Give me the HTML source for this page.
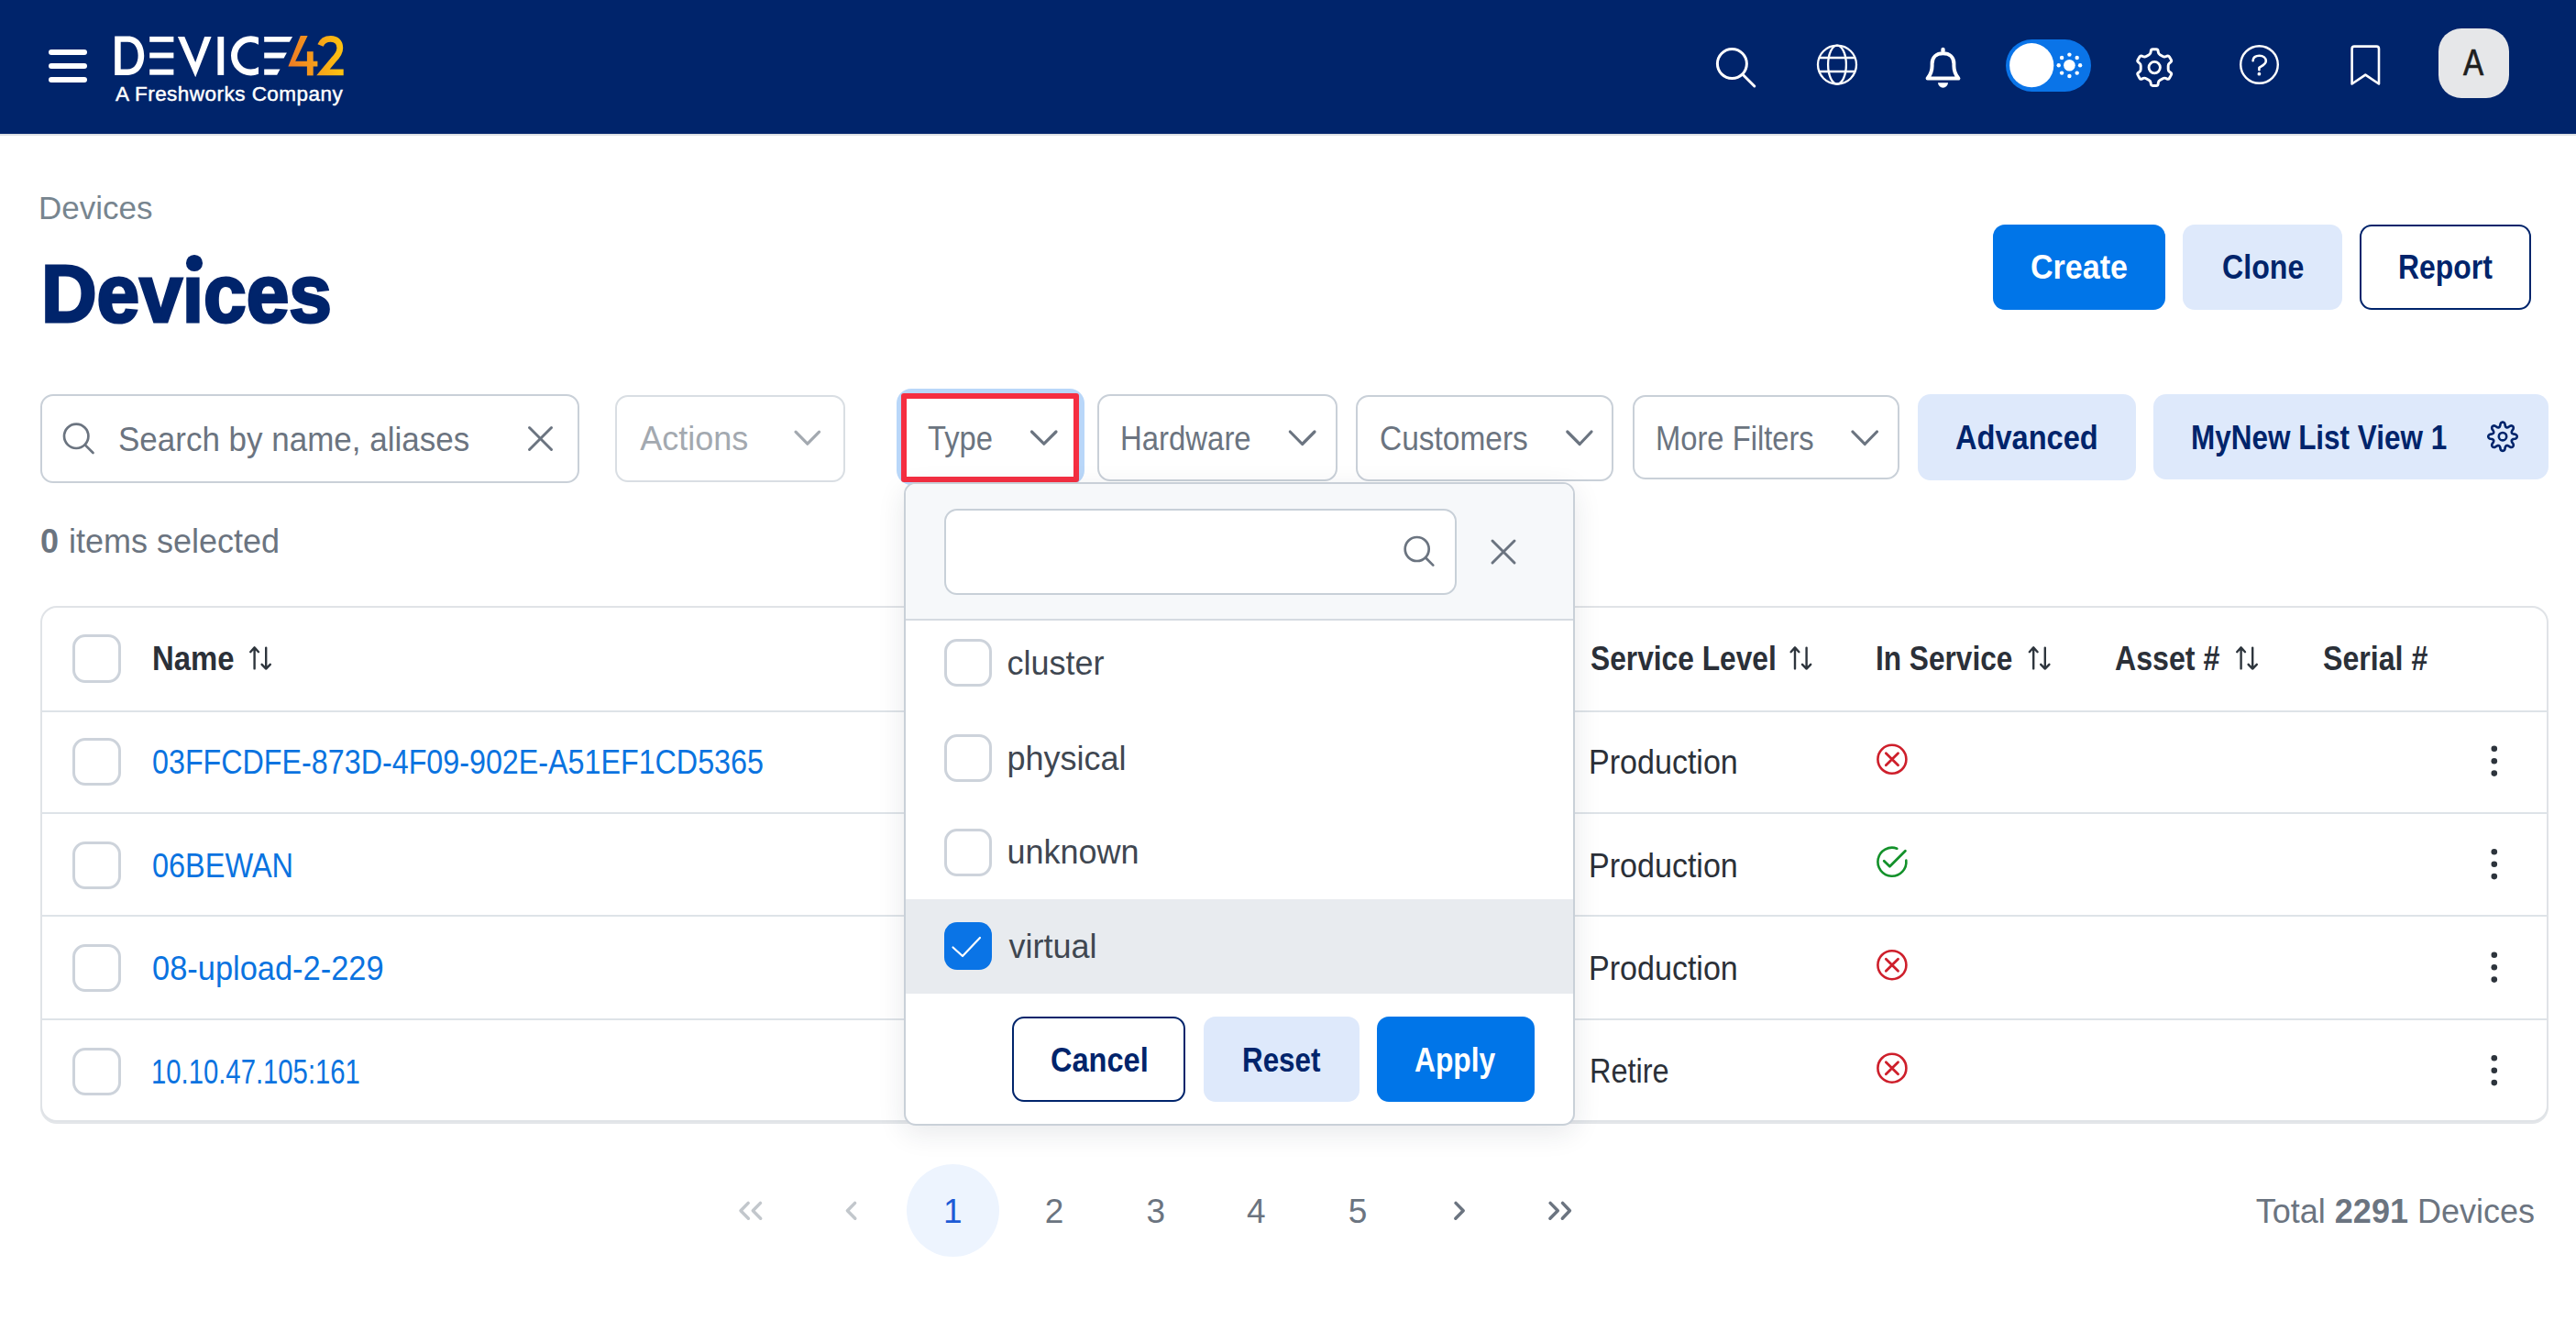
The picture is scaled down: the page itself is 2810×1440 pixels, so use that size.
<!DOCTYPE html>
<html>
<head>
<meta charset="utf-8">
<style>
html,body{margin:0;padding:0;}
body{width:2810px;height:1440px;position:relative;overflow:hidden;background:#fff;font-family:"Liberation Sans",sans-serif;}
.a{position:absolute;}
.t{position:absolute;white-space:pre;line-height:1;font-family:"Liberation Sans",sans-serif;}
.b{font-weight:700;}
svg{position:absolute;overflow:visible;}
.box{position:absolute;box-sizing:border-box;}
</style>
</head>
<body>
<!-- HEADER -->
<div class="a" style="left:0;top:0;width:2810px;height:146px;background:#00246B;"></div>
<div class="a" style="left:0;top:146px;width:2810px;height:2px;background:#DCDFE3;"></div>
<!-- hamburger -->
<div class="a" style="left:53px;top:54px;width:42px;height:6px;border-radius:3px;background:#fff;"></div>
<div class="a" style="left:53px;top:69px;width:42px;height:6px;border-radius:3px;background:#fff;"></div>
<div class="a" style="left:53px;top:84px;width:42px;height:6px;border-radius:3px;background:#fff;"></div>
<svg width="2810" height="146" style="left:0;top:0;">
<defs>
<linearGradient id="lg" gradientUnits="userSpaceOnUse" x1="314" y1="0" x2="375" y2="0"><stop offset="0" stop-color="#EE7A25"/><stop offset="1" stop-color="#FEC40F"/></linearGradient>
<clipPath id="cc"><rect x="240" y="30" width="42" height="60"/></clipPath>
</defs>
<g fill="#fff">
<path fill-rule="evenodd" d="M125.2,39.4 H139.5 C151.5,39.4 157.2,49.5 157.2,60.6 C157.2,71.7 151.5,81.9 139.5,81.9 H125.2 Z M131.7,45.7 H139 C147,45.7 150.6,52.5 150.6,60.6 C150.6,68.7 147,75.6 139,75.6 H131.7 Z"/>
<rect x="163.2" y="39.9" width="26.2" height="5.9"/>
<rect x="163.2" y="57.5" width="26.2" height="5.9"/>
<rect x="163.2" y="75.6" width="26.2" height="6.1"/>
<path d="M193.9,40 L201.3,40 L213.2,68 L223.1,40 L230.6,40 L213.2,84.2 Z"/>
<rect x="237.4" y="40" width="6.8" height="41.9"/>
<path clip-path="url(#cc)" fill-rule="evenodd" d="M252,60.8 A21.6,21.6 0 1,0 295.2,60.8 A21.6,21.6 0 1,0 252,60.8 Z M258.9,60.8 A14.7,14.7 0 1,0 288.3,60.8 A14.7,14.7 0 1,0 258.9,60.8 Z"/>
<path d="M288.2,39.9 L319.1,39.9 L315.8,45.8 L288.2,45.8 Z"/>
<path d="M288.2,57.5 L312.9,57.5 L309.6,63.4 L288.2,63.4 Z"/>
<path d="M288.2,75.6 L305.5,75.6 L302.2,81.7 L288.2,81.7 Z"/>
</g>
<g fill="url(#lg)">
<path d="M327.8,38.9 L335.6,38.9 L322.2,66.7 L346.4,66.7 L346.4,72.4 L314.4,72.4 Z"/>
<rect x="334.9" y="56.2" width="6.8" height="26.2"/>
</g>
<path d="M349.6,49.5 C351.5,44.5 355.5,42.3 360.8,42.3 C367.2,42.3 370.8,46.3 370.8,52.2 C370.8,57 368.5,60.5 364,65 L352.5,78.8 L374.7,78.8" fill="none" stroke="url(#lg)" stroke-width="6.8" stroke-linejoin="miter" stroke-miterlimit="3"/>
<g fill="none" stroke="#fff" stroke-linecap="round" stroke-linejoin="round">
<circle cx="1889.4" cy="69.6" r="16" stroke-width="3"/>
<line x1="1901.8" y1="82" x2="1913.8" y2="94" stroke-width="3"/>
<circle cx="2004" cy="70.6" r="21" stroke-width="2.3"/>
<ellipse cx="2004" cy="70.6" rx="9.9" ry="21" stroke-width="2.3"/>
<line x1="1984.4" y1="63" x2="2023.6" y2="63" stroke-width="2.3" stroke-linecap="butt"/>
<line x1="1984.4" y1="78" x2="2023.6" y2="78" stroke-width="2.3" stroke-linecap="butt"/>
<path d="M2102.6,85.6 C2105.2,82.4 2107.6,78 2107.6,72 L2107.6,69.5 C2107.6,62.2 2112.3,58.3 2119.5,58.3 C2126.7,58.3 2131.4,62.2 2131.4,69.5 L2131.4,72 C2131.4,78 2133.8,82.4 2136.4,85.6 Z" stroke-width="4"/>
<path d="M2346.07,57.05 L2346.28,55.52 Q2346.52,53.74 2348.32,53.74 L2352.08,53.74 Q2353.88,53.74 2354.12,55.52 L2354.33,57.05 Q2354.57,58.83 2356.13,59.73 L2359.24,61.53 Q2360.80,62.43 2362.47,61.75 L2363.89,61.16 Q2365.56,60.48 2366.46,62.04 L2368.34,65.30 Q2369.24,66.86 2367.82,67.96 L2366.60,68.90 Q2365.17,70.00 2365.17,71.80 L2365.17,75.40 Q2365.17,77.20 2366.60,78.30 L2367.82,79.24 Q2369.24,80.34 2368.34,81.90 L2366.46,85.16 Q2365.56,86.72 2363.89,86.04 L2362.47,85.45 Q2360.80,84.77 2359.24,85.67 L2356.13,87.47 Q2354.57,88.37 2354.33,90.15 L2354.12,91.68 Q2353.88,93.46 2352.08,93.46 L2348.32,93.46 Q2346.52,93.46 2346.28,91.68 L2346.07,90.15 Q2345.83,88.37 2344.27,87.47 L2341.16,85.67 Q2339.60,84.77 2337.93,85.45 L2336.51,86.04 Q2334.84,86.72 2333.94,85.16 L2332.06,81.90 Q2331.16,80.34 2332.58,79.24 L2333.80,78.30 Q2335.23,77.20 2335.23,75.40 L2335.23,71.80 Q2335.23,70.00 2333.80,68.90 L2332.58,67.96 Q2331.16,66.86 2332.06,65.30 L2333.94,62.04 Q2334.84,60.48 2336.51,61.16 L2337.93,61.75 Q2339.60,62.43 2341.16,61.53 L2344.27,59.73 Q2345.83,58.83 2346.07,57.05 Z" stroke-width="2.9"/>
<circle cx="2350.2" cy="73.6" r="6.2" stroke-width="2.8"/>
<circle cx="2464.5" cy="70.5" r="20.3" stroke-width="2.4"/>
<path d="M2457.6,66.3 C2457.6,62.6 2460.5,60.8 2464.6,60.8 C2469,60.8 2471.8,63.2 2471.8,66.6 C2471.8,70.2 2467.8,71.8 2464.4,73.8 L2464.4,76.2" stroke-width="2.6"/>
<path d="M2565.6,91.5 L2565.6,53.2 Q2565.6,50.6 2568.2,50.6 L2592.4,50.6 Q2595,50.6 2595,53.2 L2595,91.5 L2580.3,81.6 Z" stroke-width="2.6"/>
</g>
<g fill="#fff">
<rect x="2117.3" y="51.8" width="4.4" height="6" rx="2.2"/>
<path d="M2114,90.2 A5.5,5.5 0 0,0 2125,90.2 Z"/>
<circle cx="2464.4" cy="80.7" r="1.9"/>
</g>
<rect x="2188" y="43" width="93" height="57" rx="28.5" fill="#0A74E8"/>
<circle cx="2216.2" cy="71.2" r="24.1" fill="#fff"/>
<g fill="#fff">
<circle cx="2257.4" cy="71.3" r="6.3"/>
<circle cx="2257.4" cy="59.6" r="2.2"/><circle cx="2257.4" cy="83" r="2.2"/>
<circle cx="2245.7" cy="71.3" r="2.2"/><circle cx="2269.1" cy="71.3" r="2.2"/>
<circle cx="2249.1" cy="63" r="2.2"/><circle cx="2265.7" cy="63" r="2.2"/>
<circle cx="2249.1" cy="79.6" r="2.2"/><circle cx="2265.7" cy="79.6" r="2.2"/>
</g>
<rect x="2660" y="31" width="77" height="76" rx="25" fill="#E6E7E9"/>
</svg>
<div class="t" style="left:126px;top:91.7px;font-size:22.5px;color:#fff;letter-spacing:0.47px;-webkit-text-stroke:0.45px #fff;">A Freshworks Company</div>
<div class="t" style="left:2687px;top:47.5px;font-size:40px;color:#1E1E1E;transform:scaleX(0.83);transform-origin:0 0;-webkit-text-stroke:0.7px #1E1E1E;">A</div>
<!-- PAGE TITLE -->
<div class="t" style="left:42px;top:209.4px;font-size:35px;color:#77858F;">Devices</div>
<div class="t b" style="left:44.9px;top:275.9px;font-size:89px;color:#00246B;transform:scaleX(0.942);transform-origin:0 0;-webkit-text-stroke:3px #00246B;">Dev&#305;ces</div>
<div class="a" style="left:203.3px;top:278px;width:17.6px;height:17.6px;border-radius:50%;background:#00246B;"></div>
<div class="box" style="left:2174px;top:245px;width:188px;height:92.6px;border-radius:13px;background:#0075E8;"></div>
<div class="t b" style="left:2215.1px;top:274.3px;font-size:36px;color:#fff;transform:scaleX(0.945);transform-origin:0 0;">Create</div>
<div class="box" style="left:2381px;top:245px;width:174px;height:92.6px;border-radius:13px;background:#DEE9FB;"></div>
<div class="t b" style="left:2423.6px;top:274.3px;font-size:36px;color:#00246B;transform:scaleX(0.893);transform-origin:0 0;">Clone</div>
<div class="box" style="left:2574px;top:245px;width:187px;height:92.6px;border-radius:13px;border:2.6px solid #00246B;background:#fff;"></div>
<div class="t b" style="left:2616.2px;top:274.3px;font-size:36px;color:#00246B;transform:scaleX(0.886);transform-origin:0 0;">Report</div>
<div class="box" style="left:44px;top:430px;width:588px;height:96.5px;border-radius:14px;border:2px solid #C9D0D8;background:#fff;"></div>
<div class="t" style="left:128.8px;top:462.0px;font-size:36px;color:#6B7480;transform:scaleX(0.972);transform-origin:0 0;">Search by name, aliases</div>
<div class="box" style="left:670.6px;top:430.6px;width:251.5px;height:95px;border-radius:14px;border:2px solid #D9DEE3;background:#fff;"></div>
<div class="t" style="left:698.2px;top:460.8px;font-size:36px;color:#A3A9B0;">Actions</div>
<div class="box" style="left:1196.5px;top:430.3px;width:262px;height:95px;border-radius:14px;border:2px solid #C9D0D8;background:#fff;"></div>
<div class="t" style="left:1222.1px;top:461.1px;font-size:36px;color:#6B7480;transform:scaleX(0.914);transform-origin:0 0;">Hardware</div>
<div class="box" style="left:1478.6px;top:430.6px;width:281.4px;height:94.4px;border-radius:14px;border:2px solid #C9D0D8;background:#fff;"></div>
<div class="t" style="left:1504.8px;top:461.0px;font-size:36px;color:#6B7480;transform:scaleX(0.93);transform-origin:0 0;">Customers</div>
<div class="box" style="left:1780.6px;top:430.6px;width:291.4px;height:92.6px;border-radius:14px;border:2px solid #C9D0D8;background:#fff;"></div>
<div class="t" style="left:1806px;top:461.0px;font-size:36px;color:#6B7480;transform:scaleX(0.909);transform-origin:0 0;">More Filters</div>
<div class="box" style="left:2092px;top:429.8px;width:238px;height:94.2px;border-radius:14px;background:#DEE9FB;"></div>
<div class="t b" style="left:2132.9px;top:460.3px;font-size:36px;color:#00246B;transform:scaleX(0.905);transform-origin:0 0;">Advanced</div>
<div class="box" style="left:2349.2px;top:429.8px;width:430.8px;height:93px;border-radius:14px;background:#DEE9FB;"></div>
<div class="t b" style="left:2390px;top:460.3px;font-size:36px;color:#00246B;transform:scaleX(0.874);transform-origin:0 0;">MyNew List View 1</div>
<svg width="2810" height="600" style="left:0;top:0;"><path d="M2745.70,476.20 L2745.61,476.81 L2745.35,477.41 L2744.91,477.97 L2744.26,478.46 L2742.95,478.78 L2741.63,478.99 L2740.96,479.29 L2740.46,479.60 L2740.11,479.93 L2739.89,480.29 L2739.78,480.71 L2739.80,481.19 L2739.93,481.76 L2740.20,482.45 L2740.98,483.53 L2741.68,484.69 L2741.79,485.50 L2741.71,486.20 L2741.47,486.81 L2741.10,487.30 L2740.61,487.67 L2740.00,487.91 L2739.30,487.99 L2738.49,487.88 L2737.33,487.18 L2736.25,486.40 L2735.56,486.13 L2734.99,486.00 L2734.51,485.98 L2734.09,486.09 L2733.73,486.31 L2733.40,486.66 L2733.09,487.16 L2732.79,487.83 L2732.58,489.15 L2732.26,490.46 L2731.77,491.11 L2731.21,491.55 L2730.61,491.81 L2730.00,491.90 L2729.39,491.81 L2728.79,491.55 L2728.23,491.11 L2727.74,490.46 L2727.42,489.15 L2727.21,487.83 L2726.91,487.16 L2726.60,486.66 L2726.27,486.31 L2725.91,486.09 L2725.49,485.98 L2725.01,486.00 L2724.44,486.13 L2723.75,486.40 L2722.67,487.18 L2721.51,487.88 L2720.70,487.99 L2720.00,487.91 L2719.39,487.67 L2718.90,487.30 L2718.53,486.81 L2718.29,486.20 L2718.21,485.50 L2718.32,484.69 L2719.02,483.53 L2719.80,482.45 L2720.07,481.76 L2720.20,481.19 L2720.22,480.71 L2720.11,480.29 L2719.89,479.93 L2719.54,479.60 L2719.04,479.29 L2718.37,478.99 L2717.05,478.78 L2715.74,478.46 L2715.09,477.97 L2714.65,477.41 L2714.39,476.81 L2714.30,476.20 L2714.39,475.59 L2714.65,474.99 L2715.09,474.43 L2715.74,473.94 L2717.05,473.62 L2718.37,473.41 L2719.04,473.11 L2719.54,472.80 L2719.89,472.47 L2720.11,472.11 L2720.22,471.69 L2720.20,471.21 L2720.07,470.64 L2719.80,469.95 L2719.02,468.87 L2718.32,467.71 L2718.21,466.90 L2718.29,466.20 L2718.53,465.59 L2718.90,465.10 L2719.39,464.73 L2720.00,464.49 L2720.70,464.41 L2721.51,464.52 L2722.67,465.22 L2723.75,466.00 L2724.44,466.27 L2725.01,466.40 L2725.49,466.42 L2725.91,466.31 L2726.27,466.09 L2726.60,465.74 L2726.91,465.24 L2727.21,464.57 L2727.42,463.25 L2727.74,461.94 L2728.23,461.29 L2728.79,460.85 L2729.39,460.59 L2730.00,460.50 L2730.61,460.59 L2731.21,460.85 L2731.77,461.29 L2732.26,461.94 L2732.58,463.25 L2732.79,464.57 L2733.09,465.24 L2733.40,465.74 L2733.73,466.09 L2734.09,466.31 L2734.51,466.42 L2734.99,466.40 L2735.56,466.27 L2736.25,466.00 L2737.33,465.22 L2738.49,464.52 L2739.30,464.41 L2740.00,464.49 L2740.61,464.73 L2741.10,465.10 L2741.47,465.59 L2741.71,466.20 L2741.79,466.90 L2741.68,467.71 L2740.98,468.87 L2740.20,469.95 L2739.93,470.64 L2739.80,471.21 L2739.78,471.69 L2739.89,472.11 L2740.11,472.47 L2740.46,472.80 L2740.96,473.11 L2741.63,473.41 L2742.95,473.62 L2744.26,473.94 L2744.91,474.43 L2745.35,474.99 L2745.61,475.59 Z" fill="none" stroke="#00246B" stroke-width="2.6" stroke-linejoin="round"/><circle cx="2730" cy="476.2" r="4.2" fill="none" stroke="#00246B" stroke-width="2.6"/></svg>
<!-- Type button with focus ring and red annotation -->
<div class="box" style="left:978.4px;top:423.9px;width:204.4px;height:105.4px;border-radius:16px;background:#B9D7F9;"></div>
<div class="box" style="left:986px;top:432px;width:189px;height:91px;background:#fff;box-shadow:inset 0 1px 3px rgba(0,0,0,0.08);"></div>
<div class="box" style="left:982.8px;top:429.3px;width:194.6px;height:96.5px;border:6.2px solid #F52E41;border-radius:3px;"></div>
<div class="t" style="left:1011.5px;top:460.9px;font-size:36px;color:#6B7480;transform:scaleX(0.908);transform-origin:0 0;">Type</div>
<svg width="2810" height="620" style="left:0;top:0;">
<g fill="none" stroke="#6B7480" stroke-linecap="round" stroke-linejoin="round">
<circle cx="83.2" cy="475.8" r="13.2" stroke-width="2.7"/>
<line x1="92.8" y1="485.4" x2="101.5" y2="494" stroke-width="2.7"/>
<line x1="577.5" y1="466.5" x2="601.5" y2="490.5" stroke-width="3"/>
<line x1="601.5" y1="466.5" x2="577.5" y2="490.5" stroke-width="3"/>
<path d="M1125.5,471 L1138.8,484.2 L1152,471" stroke-width="3.2"/>
<path d="M1407.3,471 L1420.6,484.5 L1434,471" stroke-width="3.2"/>
<path d="M1709.8,471 L1723.2,484.5 L1736,471" stroke-width="3.2"/>
<path d="M2021,471 L2034.2,484.5 L2047.4,471" stroke-width="3.2"/>
</g>
<path d="M868,471.2 L880.8,484.2 L893.6,471.2" fill="none" stroke="#A3A9B0" stroke-width="3.2" stroke-linecap="round" stroke-linejoin="round"/>
</svg>
<div class="t b" style="left:44px;top:573.1px;font-size:36px;color:#6B7480;">0</div>
<div class="t" style="left:75px;top:573.1px;font-size:36px;color:#6B7480;">items selected</div>
<div class="box" style="left:44.2px;top:661px;width:2735.4px;height:563px;border-radius:18px;border:2px solid #E0E3E7;background:#fff;box-shadow:0 2px 0 #E3E6E9;"></div>
<div class="a" style="left:46px;top:775px;width:2732px;height:2px;background:#DEE3E8;"></div>
<div class="a" style="left:46px;top:886px;width:2732px;height:2px;background:#DEE3E8;"></div>
<div class="a" style="left:46px;top:998px;width:2732px;height:2px;background:#DEE3E8;"></div>
<div class="a" style="left:46px;top:1110.5px;width:2732px;height:2px;background:#DEE3E8;"></div>
<div class="box" style="left:79.2px;top:692.2px;width:52.5px;height:52.5px;border-radius:14px;border:3.7px solid #CDD3DB;background:#fff;"></div>
<div class="box" style="left:79.2px;top:804.7px;width:52.5px;height:52.5px;border-radius:14px;border:3.7px solid #CDD3DB;background:#fff;"></div>
<div class="box" style="left:79.2px;top:917.7px;width:52.5px;height:52.5px;border-radius:14px;border:3.7px solid #CDD3DB;background:#fff;"></div>
<div class="box" style="left:79.2px;top:1029.5px;width:52.5px;height:52.5px;border-radius:14px;border:3.7px solid #CDD3DB;background:#fff;"></div>
<div class="box" style="left:79.2px;top:1142.8px;width:52.5px;height:52.5px;border-radius:14px;border:3.7px solid #CDD3DB;background:#fff;"></div>
<div class="t b" style="left:166.1px;top:700.9px;font-size:36px;color:#2B3038;transform:scaleX(0.913);transform-origin:0 0;">Name</div>
<div class="t b" style="left:1734.9px;top:700.9px;font-size:36px;color:#2B3038;transform:scaleX(0.881);transform-origin:0 0;">Service Level</div>
<div class="t b" style="left:2046.2px;top:700.9px;font-size:36px;color:#2B3038;transform:scaleX(0.878);transform-origin:0 0;">In Service</div>
<div class="t b" style="left:2306.7px;top:700.9px;font-size:36px;color:#2B3038;transform:scaleX(0.893);transform-origin:0 0;">Asset #</div>
<div class="t b" style="left:2533.8px;top:700.9px;font-size:36px;color:#2B3038;transform:scaleX(0.892);transform-origin:0 0;">Serial #</div>
<div class="t" style="left:166.1px;top:814.0px;font-size:36px;color:#0A73E0;transform:scaleX(0.896);transform-origin:0 0;">03FFCDFE-873D-4F09-902E-A51EF1CD5365</div>
<div class="t" style="left:166.1px;top:926.7px;font-size:36px;color:#0A73E0;transform:scaleX(0.902);transform-origin:0 0;">06BEWAN</div>
<div class="t" style="left:166px;top:1039.0px;font-size:36px;color:#0A73E0;transform:scaleX(0.956);transform-origin:0 0;">08-upload-2-229</div>
<div class="t" style="left:164.6px;top:1151.5px;font-size:36px;color:#0A73E0;transform:scaleX(0.813);transform-origin:0 0;">10.10.47.105:161</div>
<div class="t" style="left:1733px;top:814.4px;font-size:36px;color:#2B3038;transform:scaleX(0.946);transform-origin:0 0;">Production</div>
<div class="t" style="left:1733px;top:926.9px;font-size:36px;color:#2B3038;transform:scaleX(0.946);transform-origin:0 0;">Production</div>
<div class="t" style="left:1733px;top:1039.4px;font-size:36px;color:#2B3038;transform:scaleX(0.946);transform-origin:0 0;">Production</div>
<div class="t" style="left:1734.3px;top:1150.8px;font-size:36px;color:#2B3038;transform:scaleX(0.902);transform-origin:0 0;">Retire</div>
<svg width="2810" height="1440" style="left:0;top:0;">
<g fill="none" stroke="#2E353D" stroke-width="2.4" stroke-linecap="round" stroke-linejoin="round">
<path d="M277.6,729.4 L277.6,706.4 M273.20000000000005,711.2 L277.6,706.4 L282.0,711.2"/>
<path d="M290.2,706.6 L290.2,729.6 M285.59999999999997,724.8 L290.2,729.6 L294.8,724.8"/>
<path d="M1958.0,729.4 L1958.0,706.4 M1953.6,711.2 L1958.0,706.4 L1962.4,711.2"/>
<path d="M1970.6000000000001,706.6 L1970.6000000000001,729.6 M1966.0000000000002,724.8 L1970.6000000000001,729.6 L1975.2,724.8"/>
<path d="M2218.2,729.4 L2218.2,706.4 M2213.7999999999997,711.2 L2218.2,706.4 L2222.6,711.2"/>
<path d="M2230.7999999999997,706.6 L2230.7999999999997,729.6 M2226.2,724.8 L2230.7999999999997,729.6 L2235.3999999999996,724.8"/>
<path d="M2444.6,729.4 L2444.6,706.4 M2440.2,711.2 L2444.6,706.4 L2449.0,711.2"/>
<path d="M2457.2,706.6 L2457.2,729.6 M2452.6,724.8 L2457.2,729.6 L2461.7999999999997,724.8"/>
</g>
<circle cx="2063.9" cy="828.3" r="15.5" fill="none" stroke="#CE1F2B" stroke-width="2.6"/>
<path d="M2057.3,821.8 L2070.5,834.8 M2070.5,821.8 L2057.3,834.8" stroke="#CE1F2B" stroke-width="2.8" stroke-linecap="round"/>
<path d="M2079.3,938.6 A15.5,15.5 0 1,1 2069.3,925.7" fill="none" stroke="#13912A" stroke-width="2.6" stroke-linecap="round"/>
<path d="M2055.2,939.2 L2061.4,945.3 L2078.4,928.2" fill="none" stroke="#13912A" stroke-width="2.8" stroke-linecap="round" stroke-linejoin="round"/>
<circle cx="2063.9" cy="1052.7" r="15.5" fill="none" stroke="#CE1F2B" stroke-width="2.6"/>
<path d="M2057.3,1046.2 L2070.5,1059.2 M2070.5,1046.2 L2057.3,1059.2" stroke="#CE1F2B" stroke-width="2.8" stroke-linecap="round"/>
<circle cx="2063.9" cy="1165.2" r="15.5" fill="none" stroke="#CE1F2B" stroke-width="2.6"/>
<path d="M2057.3,1158.7 L2070.5,1171.7 M2070.5,1158.7 L2057.3,1171.7" stroke="#CE1F2B" stroke-width="2.8" stroke-linecap="round"/>
<circle cx="2720.8" cy="816.8" r="3.3" fill="#2D343C"/>
<circle cx="2720.8" cy="830.2" r="3.3" fill="#2D343C"/>
<circle cx="2720.8" cy="843.6" r="3.3" fill="#2D343C"/>
<circle cx="2720.8" cy="929.3" r="3.3" fill="#2D343C"/>
<circle cx="2720.8" cy="942.7" r="3.3" fill="#2D343C"/>
<circle cx="2720.8" cy="956.1" r="3.3" fill="#2D343C"/>
<circle cx="2720.8" cy="1041.8" r="3.3" fill="#2D343C"/>
<circle cx="2720.8" cy="1055.2" r="3.3" fill="#2D343C"/>
<circle cx="2720.8" cy="1068.6" r="3.3" fill="#2D343C"/>
<circle cx="2720.8" cy="1154.3" r="3.3" fill="#2D343C"/>
<circle cx="2720.8" cy="1167.7" r="3.3" fill="#2D343C"/>
<circle cx="2720.8" cy="1181.1" r="3.3" fill="#2D343C"/>
</svg>
<div class="box" style="left:985.5px;top:525.5px;width:732.5px;height:702.5px;border-radius:13px;border:2.1px solid #C9D0D8;background:#fff;box-shadow:0 8px 30px rgba(30,40,60,0.10);overflow:hidden;">
<div class="a" style="left:0;top:0;width:100%;height:147.2px;background:#F6F8FA;border-bottom:2px solid #D5DBE1;"></div>
<div class="a" style="left:0;top:453px;width:100%;height:103.1px;background:#E8EBEF;"></div>
</div>
<div class="box" style="left:1030px;top:554.5px;width:559px;height:94.5px;border-radius:14px;border:2px solid #C8D0D8;background:#fff;"></div>
<div class="box" style="left:1029.5px;top:696.7px;width:52.2px;height:52px;border-radius:14px;border:3.7px solid #CDD3DB;background:#fff;"></div>
<div class="box" style="left:1029.5px;top:801px;width:52.2px;height:52px;border-radius:14px;border:3.7px solid #CDD3DB;background:#fff;"></div>
<div class="box" style="left:1029.5px;top:904px;width:52.2px;height:52px;border-radius:14px;border:3.7px solid #CDD3DB;background:#fff;"></div>
<div class="box" style="left:1029.5px;top:1006.3px;width:52.2px;height:52px;border-radius:14px;background:#0A74E6;"></div>
<div class="t" style="left:1098.5px;top:705.8px;font-size:36px;color:#3F4751;">cluster</div>
<div class="t" style="left:1098.5px;top:809.5px;font-size:36px;color:#3F4751;">physical</div>
<div class="t" style="left:1098.5px;top:912.3px;font-size:36px;color:#3F4751;">unknown</div>
<div class="t" style="left:1100.5px;top:1014.6px;font-size:36px;color:#3F4751;">virtual</div>
<div class="box" style="left:1104.3px;top:1109.3px;width:189.2px;height:92.3px;border-radius:13px;border:2.6px solid #00246B;background:#fff;"></div>
<div class="t b" style="left:1145.9px;top:1139.4px;font-size:36px;color:#00246B;transform:scaleX(0.904);transform-origin:0 0;">Cancel</div>
<div class="box" style="left:1313.3px;top:1109.3px;width:169.5px;height:92.3px;border-radius:13px;background:#DEE9FB;"></div>
<div class="t b" style="left:1354.7px;top:1139.4px;font-size:36px;color:#00246B;transform:scaleX(0.871);transform-origin:0 0;">Reset</div>
<div class="box" style="left:1502px;top:1109.3px;width:171.7px;height:92.3px;border-radius:13px;background:#0075E8;"></div>
<div class="t b" style="left:1543.3px;top:1139.4px;font-size:36px;color:#fff;transform:scaleX(0.882);transform-origin:0 0;">Apply</div>
<svg width="2810" height="1440" style="left:0;top:0;">
<g fill="none" stroke="#6B7480" stroke-linecap="round" stroke-linejoin="round">
<circle cx="1545.7" cy="599" r="13" stroke-width="2.7"/>
<line x1="1555.2" y1="608.5" x2="1563.3" y2="616.6" stroke-width="2.7"/>
<path d="M1628,590 L1652,614 M1652,590 L1628,614" stroke-width="3"/>
</g>
<path d="M1039.5,1033.5 L1050,1043 L1069,1023" fill="none" stroke="#fff" stroke-width="2.2" stroke-linecap="round" stroke-linejoin="round"/>
</svg>
<div class="a" style="left:988.8px;top:1269.9px;width:101px;height:101px;border-radius:50%;background:#EDF4FE;"></div>
<div class="t" style="left:999.3px;width:80px;text-align:center;top:1303.4px;font-size:37px;color:#1E5BD6;">1</div>
<div class="t" style="left:1110px;width:80px;text-align:center;top:1303.4px;font-size:37px;color:#6B7480;">2</div>
<div class="t" style="left:1220.7px;width:80px;text-align:center;top:1303.4px;font-size:37px;color:#6B7480;">3</div>
<div class="t" style="left:1330.2px;width:80px;text-align:center;top:1303.4px;font-size:37px;color:#6B7480;">4</div>
<div class="t" style="left:1441px;width:80px;text-align:center;top:1303.4px;font-size:37px;color:#6B7480;">5</div>
<svg width="2810" height="1440" style="left:0;top:0;">
<g fill="none" stroke-width="3.5" stroke-linecap="round" stroke-linejoin="round">
<path stroke="#C2C7CC" d="M816.2,1312.4 L808,1320.8 L816.4,1329.2 M829.5,1312.4 L821.3,1320.8 L829.7,1329.2"/>
<path stroke="#C2C7CC" d="M932.6,1312.4 L924.4,1320.8 L932.8,1329.2"/>
<path stroke="#6B7480" d="M1588,1312.4 L1596.2,1320.8 L1587.8,1329.2"/>
<path stroke="#6B7480" d="M1691.1,1312.4 L1699.3,1320.8 L1690.9,1329.2 M1704.5,1312.4 L1712.4,1320.8 L1704.3,1329.2"/>
</g></svg>
<div class="t" style="left:2460.8px;top:1303.8px;font-size:36px;color:#6B7480;">Total <b>2291</b> Devices</div>
</body>
</html>
